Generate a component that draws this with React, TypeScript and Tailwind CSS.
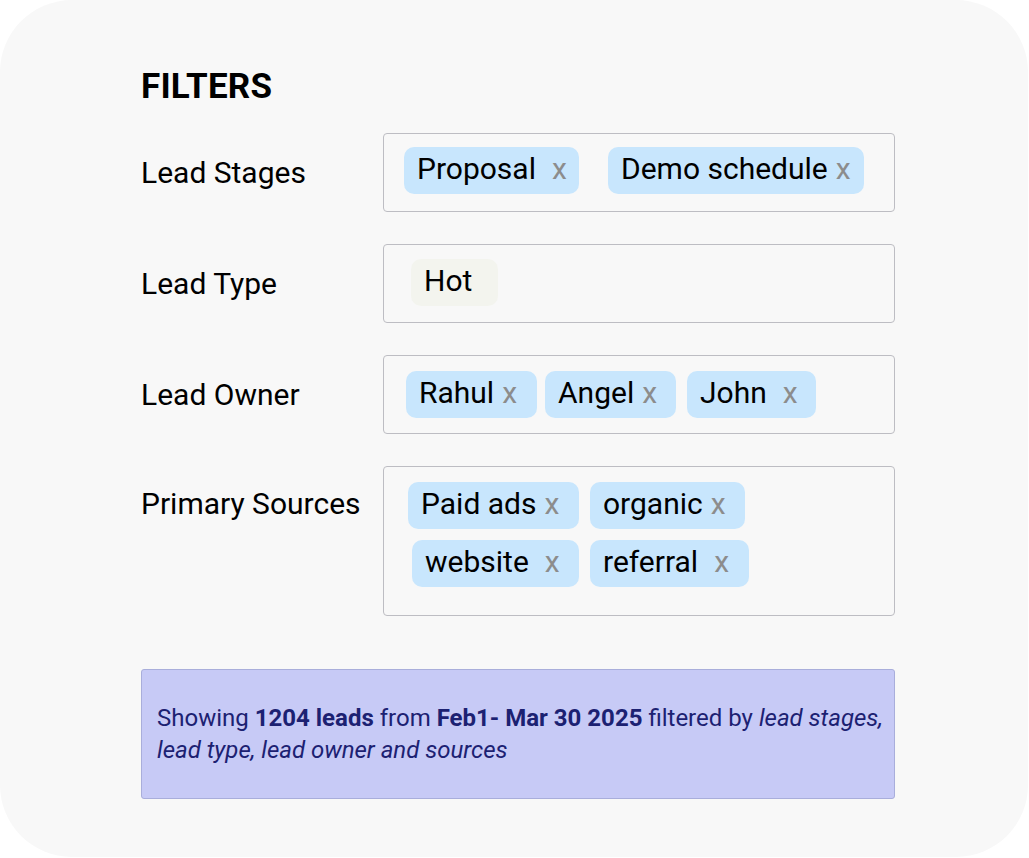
import React from 'react';

type Chip = { label: string; w: number; ml?: number; tone?: 'blue' | 'plain'; gap?: number };

const rows: { title: string; tall?: boolean; lift?: string; lines: Chip[][] }[] = [
    {
        title: 'Lead Stages',
        lift: 'pb-[4px]',
        lines: [[
            { label: 'Proposal', w: 175, gap: 16 },
            { label: 'Demo schedule', w: 256, ml: 29, gap: 8 },
        ]],
    },
    {
        title: 'Lead Type',
        lift: 'pb-[3px]',
        lines: [[{ label: 'Hot', w: 87, ml: 7, tone: 'plain' }]],
    },
    {
        title: 'Lead Owner',
        lines: [[
            { label: 'Rahul', w: 131, ml: 2, gap: 8 },
            { label: 'Angel', w: 131, ml: 8, gap: 8 },
            { label: 'John', w: 129, ml: 11, gap: 16 },
        ]],
    },
    {
        title: 'Primary Sources',
        tall: true,
        lines: [
            [
                { label: 'Paid ads', w: 171, ml: 4, gap: 8 },
                { label: 'organic', w: 155, ml: 11, gap: 8 },
            ],
            [
                { label: 'website', w: 167, ml: 8, gap: 16 },
                { label: 'referral', w: 159, ml: 11, gap: 16 },
            ],
        ],
    },
];

function Tag({ chip }: { chip: Chip }) {
    const plain = chip.tone === 'plain';
    return (
        <div
            className={
                'h-[47px] flex items-center pl-[13px] pb-[3px] rounded-[10px] shrink-0 ' +
                (plain ? 'bg-[#f3f4ee]' : 'bg-[#c8e6fd]')
            }
            style={{ width: chip.w, marginLeft: chip.ml ?? 0 }}
        >
            <span className="text-[30px] leading-none text-black">{chip.label}</span>
            {!plain && (
                <span className="text-[30px] leading-none text-[#8c8c8c]" style={{ marginLeft: chip.gap ?? 8 }}>
                    x
                </span>
            )}
        </div>
    );
}

export default function App() {
    return (
        <div className="w-[1029px] h-[858px] bg-white" style={{ fontFamily: 'Roboto, "Liberation Sans", sans-serif' }}>
            <div className="w-[1028px] h-[857px] bg-[#f8f8f8] rounded-[72px] pl-[141px] pt-[69px]">
                <h1 className="text-[35px] font-bold leading-[36px] text-black tracking-[0.2px]">FILTERS</h1>

                <div className="mt-[28px] flex flex-col gap-[32px]">
                    {rows.map((row) => (
                        <div key={row.title} className={'flex ' + (row.tall ? 'items-start' : 'items-center')}>
                            <div className={'w-[242px] text-[30px] text-black leading-none ' + (row.tall ? 'mt-[23px]' : '')}>
                                {row.title}
                            </div>
                            <div
                                className={
                                    'w-[512px] border border-[#bdbdc3] rounded-[4px] pl-[20px] flex flex-col gap-[11px] ' +
                                    (row.tall ? 'h-[150px] pt-[15px] ' : 'h-[79px] justify-center ') +
                                    (row.lift ?? '')
                                }
                            >
                                {row.lines.map((line, i) => (
                                    <div key={i} className="flex items-center">
                                        {line.map((c) => (
                                            <Tag key={c.label} chip={c} />
                                        ))}
                                    </div>
                                ))}
                            </div>
                        </div>
                    ))}
                </div>

                <div className="mt-[53px] w-[754px] h-[130px] bg-[#c7caf6] border border-[#a9aedb] rounded-[3px] pl-[15px] pr-[4px] flex items-center">
                    <p className="text-[24px] leading-[32px] text-[#1c2172]">
                        <span className="whitespace-nowrap">
                            Showing <b>1204 leads</b> from <b>Feb1- Mar 30 2025</b> filtered by <i>lead stages,</i>
                        </span>
                        <br />
                        <i>lead type, lead owner and sources</i>
                    </p>
                </div>
            </div>
        </div>
    );
}
